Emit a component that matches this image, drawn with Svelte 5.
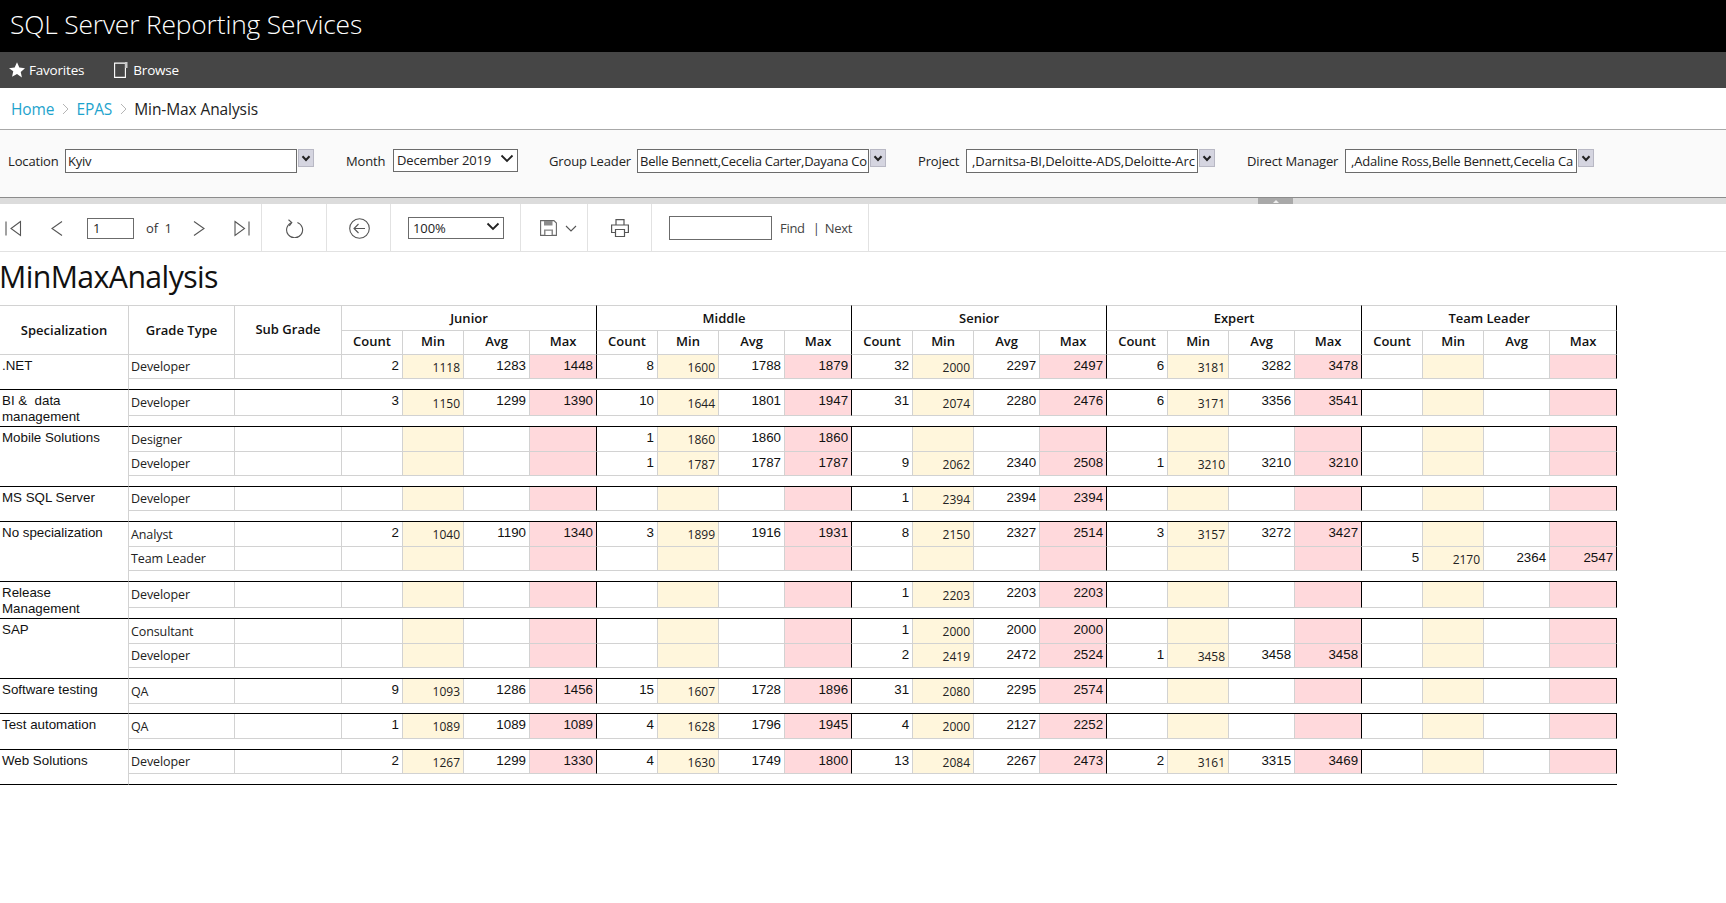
<script>
  const groups = ['Junior', 'Middle', 'Senior', 'Expert', 'Team Leader'];
  const subs = ['Count', 'Min', 'Avg', 'Max'];
  const widths = [61, 61, 66, 67];
  const S = (n) => Array(5).fill(0).map((_, i) => n[i] || null);
  const sections = [
    { name: '.NET', spacer: 11, rows: [{ g: 'Developer', h: 24, v: S([[2, 1118, 1283, 1448], [8, 1600, 1788, 1879], [32, 2000, 2297, 2497], [6, 3181, 3282, 3478]]) }] },
    { name: 'BI &\u00a0 data management', spacer: 11, rows: [{ g: 'Developer', h: 26, v: S([[3, 1150, 1299, 1390], [10, 1644, 1801, 1947], [31, 2074, 2280, 2476], [6, 3171, 3356, 3541]]) }] },
    { name: 'Mobile Solutions', spacer: 11, rows: [
      { g: 'Designer', h: 25, v: S([null, [1, 1860, 1860, 1860]]) },
      { g: 'Developer', h: 24, v: S([null, [1, 1787, 1787, 1787], [9, 2062, 2340, 2508], [1, 3210, 3210, 3210]]) }] },
    { name: 'MS SQL Server', spacer: 11, rows: [{ g: 'Developer', h: 24, v: S([null, null, [1, 2394, 2394, 2394]]) }] },
    { name: 'No specialization', spacer: 11, rows: [
      { g: 'Analyst', h: 25, v: S([[2, 1040, 1190, 1340], [3, 1899, 1916, 1931], [8, 2150, 2327, 2514], [3, 3157, 3272, 3427]]) },
      { g: 'Team Leader', h: 24, v: S([null, null, null, null, [5, 2170, 2364, 2547]]) }] },
    { name: 'Release Management', spacer: 11, rows: [{ g: 'Developer', h: 26, v: S([null, null, [1, 2203, 2203, 2203]]) }] },
    { name: 'SAP', spacer: 11, rows: [
      { g: 'Consultant', h: 25, v: S([null, null, [1, 2000, 2000, 2000]]) },
      { g: 'Developer', h: 24, v: S([null, null, [2, 2419, 2472, 2524], [1, 3458, 3458, 3458]]) }] },
    { name: 'Software testing', spacer: 10, rows: [{ g: 'QA', h: 25, v: S([[9, 1093, 1286, 1456], [15, 1607, 1728, 1896], [31, 2080, 2295, 2574]]) }] },
    { name: 'Test automation', spacer: 11, rows: [{ g: 'QA', h: 25, v: S([[1, 1089, 1089, 1089], [4, 1628, 1796, 1945], [4, 2000, 2127, 2252]]) }] },
    { name: 'Web Solutions', spacer: 11, rows: [{ g: 'Developer', h: 24, v: S([[2, 1267, 1299, 1330], [4, 1630, 1749, 1800], [13, 2084, 2267, 2473], [2, 3161, 3315, 3469]]) }] }
  ];
  const params = [
    { label: 'Location', value: 'Kyiv', cls: 'p-loc' },
    { label: 'Month', value: 'December 2019', cls: 'p-month', select: true },
    { label: 'Group Leader', value: 'Belle Bennett,Cecelia Carter,Dayana Co', cls: 'p-gl' },
    { label: 'Project', value: ',Darnitsa-BI,Deloitte-ADS,Deloitte-Arc', cls: 'p-pr' },
    { label: 'Direct Manager', value: ',Adaline Ross,Belle Bennett,Cecelia Ca', cls: 'p-dm' }
  ];
</script>

<div class="page">
  <header class="brand">SQL Server Reporting Services</header>
  <nav class="nav">
    <span class="nav-item fav">
      <svg width="16" height="16" viewBox="0 0 24 24"><path fill="#fff" d="M12 .5l3.500 7.800 8.500.9-6.400 5.700 1.800 8.400L12 18.100l-7.400 4.200 1.800-8.400L0 9.200l8.500-.9z"/></svg>
      Favorites
    </span>
    <span class="nav-item brw">
      <svg width="14" height="16" viewBox="0 0 14 16"><path fill="none" stroke="#fff" stroke-width="1.100" d="M.6 1.100h10.800v14.300H.6z"/><path fill="#c8c8c8" d="M11 0h2.500v6H11z"/></svg>
      Browse
    </span>
  </nav>
  <div class="crumbs">
    <span class="link">Home</span>
    <svg class="sep" width="7" height="12" viewBox="0 0 7 12"><path d="M1 1l5 5-5 5" fill="none" stroke="#b5b5b5" stroke-width="1"/></svg>
    <span class="link">EPAS</span>
    <svg class="sep" width="7" height="12" viewBox="0 0 7 12"><path d="M1 1l5 5-5 5" fill="none" stroke="#b5b5b5" stroke-width="1"/></svg>
    <span class="cur">Min-Max Analysis</span>
  </div>

  <div class="params">
    {#each params as p}
      <div class="param {p.cls}">
        <span class="plabel">{p.label}</span>
        {#if p.select}
          <span class="pselect">{p.value}
            <svg class="chev" width="14" height="9" viewBox="0 0 14 9"><path d="M1.500 1.500L7 7l5.500-5.500" fill="none" stroke="#222" stroke-width="1.800"/></svg>
          </span>
        {:else}
          <span class="pinput">{p.value}</span>
          <span class="pbtn"><svg width="10" height="7" viewBox="0 0 10 7"><path d="M1.500 1.200L5 5l3.500-3.800" fill="none" stroke="#222" stroke-width="2"/></svg></span>
        {/if}
      </div>
    {/each}
  </div>
  <div class="strip"><span class="handle"><i></i></span></div>

  <div class="toolbar">
    <div class="tsec t-pager">
      <svg class="i-first" width="17" height="17" viewBox="0 0 17 17"><path d="M1 1.500v14M15.500 1.500L6 8.500l9.500 7z" fill="none" stroke="#555" stroke-width="1.100"/></svg>
      <svg class="i-prev" width="13" height="17" viewBox="0 0 13 17"><path d="M12 1.500L2 8.500l10 7" fill="none" stroke="#555" stroke-width="1.100"/></svg>
      <span class="pg-input">1</span>
      <span class="of">of&nbsp; 1</span>
      <svg class="i-next" width="13" height="17" viewBox="0 0 13 17"><path d="M1 1.500l10 7-10 7" fill="none" stroke="#555" stroke-width="1.100"/></svg>
      <svg class="i-last" width="16" height="17" viewBox="0 0 16 17"><path d="M15 1.500v14M1 1.500l9.500 7-9.500 7z" fill="none" stroke="#555" stroke-width="1.100"/></svg>
    </div>
    <div class="tsec t-refresh">
      <svg width="19" height="19" viewBox="0 0 19 19"><path d="M6.800 3.400a8 8 0 1 0 5.600 0M3.500 .8L6.800 3.500 4.300 6.800" fill="none" stroke="#555" stroke-width="1.100"/></svg>
    </div>
    <div class="tsec t-back">
      <svg width="21" height="21" viewBox="0 0 21 21"><circle cx="10.500" cy="10.500" r="9.800" fill="none" stroke="#555" stroke-width="1.100"/><path d="M16 10.500H5M9.500 6l-4.500 4.500 4.500 4.500" fill="none" stroke="#555" stroke-width="1.100"/></svg>
    </div>
    <div class="tsec t-zoom">
      <span class="zoomsel">100%
        <svg class="chev" width="14" height="9" viewBox="0 0 14 9"><path d="M1.500 1.500L7 7l5.500-5.500" fill="none" stroke="#222" stroke-width="1.800"/></svg>
      </span>
    </div>
    <div class="tsec t-save">
      <svg width="17" height="16" viewBox="0 0 17 16"><path d="M.6.600h13.300l2.500 2.500v12.300H.6z" fill="none" stroke="#666" stroke-width="1.100"/><path d="M4 1h8.500v4.500H4zM4 9.500h9V15H4z" fill="#8a8a8a"/><path d="M5.500 10.800h6V15h-6z" fill="#fff"/></svg>
      <svg class="sv-chev" width="12" height="7" viewBox="0 0 12 7"><path d="M1 1l5 5 5-5" fill="none" stroke="#555" stroke-width="1.100"/></svg>
    </div>
    <div class="tsec t-print">
      <svg width="18" height="18" viewBox="0 0 18 18"><path d="M5 6V.6h8V6M4.500 13.500H.6V6h16.800v7.500h-3.900M4.500 10.500h9v7h-9z" fill="none" stroke="#555" stroke-width="1.200"/></svg>
    </div>
    <div class="tsec t-find">
      <span class="find-input"></span>
      <span class="find">Find</span><span class="bar">|</span><span class="find">Next</span>
    </div>
  </div>

  <h1 class="title">MinMaxAnalysis</h1>

  <table class="report">
    <colgroup>
      <col style="width:129px" /><col style="width:106px" /><col style="width:107px" />
      {#each groups as _}{#each widths as w}<col style="width:{w}px" />{/each}{/each}
    </colgroup>
    <thead>
      <tr class="h1">
        <th rowspan="2" class="hl spec-h">Specialization</th>
        <th rowspan="2" class="hl grade-h">Grade Type</th>
        <th rowspan="2" class="hl sub-h">Sub Grade</th>
        {#each groups as g}<th colspan="4" class="grp">{g}</th>{/each}
      </tr>
      <tr class="h2">
        {#each groups as _}
          {#each subs as s, i}<th class:end={i === 3}>{s}</th>{/each}
        {/each}
      </tr>
    </thead>
    <tbody>
      {#each sections as sec}
        {#each sec.rows as r, ri}
          <tr style="height:{r.h}px">
            {#if ri === 0}<td rowspan={sec.rows.length + 1} class="spec">{sec.name}</td>{/if}
            <td class="grade">{r.g}</td>
            <td class="sub"></td>
            {#each r.v as g}
              <td class="num">{g ? g[0] : ''}</td>
              <td class="min">{g ? g[1] : ''}</td>
              <td class="num">{g ? g[2] : ''}</td>
              <td class="num max end">{g ? g[3] : ''}</td>
            {/each}
          </tr>
        {/each}
        <tr style="height:{sec.spacer}px"><td colspan="22" class="spacer"></td></tr>
      {/each}
    </tbody>
  </table>
</div>

<style>
  :global(body) { margin: 0; background: #fff; overflow: hidden; }
  .page { font-family: "Open Sans", "Noto Sans", sans-serif; color: #222; width: 1726px; height: 903px; overflow: hidden; }
  .brand { height: 52px; background: #000; color: #fff; font-weight: 300; font-size: 26.350px; line-height: 48px; padding-left: 10px; letter-spacing: -0.15px; box-sizing: border-box; }
  .nav { height: 36px; background: #464646; color: #fff; display: flex; align-items: center; font-size: 13.500px; letter-spacing: -0.2px; }
  .nav-item { display: flex; align-items: center; }
  .fav { margin-left: 9px; gap: 4px; }
  .brw { margin-left: 30px; gap: 5px; }
  .crumbs { height: 41px; display: flex; align-items: center; font-size: 15.500px; padding-left: 11px; box-sizing: border-box; letter-spacing: -0.1px; }
  .link { color: #1ea3cd; }
  .sep { margin: 1px 7.500px 0; }
  .cur { color: #222; }
  .params { height: 69px; box-sizing: border-box; background: #fafafa; border-top: 1px solid #a8a8a8; border-bottom: 1px solid #8c8c8c; display: flex; align-items: flex-start; padding-top: 19px; font-size: 13px; letter-spacing: -0.15px; }
  .param { display: flex; align-items: flex-start; }
  .plabel { line-height: 24px; }
  .pinput { box-sizing: border-box; width: 232px; height: 24px; border: 1px solid #6b6b6b; background: #fff; line-height: 22px; padding: 0 2px; white-space: nowrap; letter-spacing: -0.27px; }
  .pbtn { box-sizing: border-box; width: 16px; height: 18px; margin-left: 1px; border: 1px solid #b8b8c4; background: #d5d5e0; display: flex; align-items: center; justify-content: center; }
  .p-loc { margin-left: 8px; } .p-loc .plabel { width: 57px; }
  .p-month { margin-left: 32px; } .p-month .plabel { width: 47px; }
  .pselect { box-sizing: border-box; width: 125px; height: 23px; border: 1px solid #6b6b6b; background: #fff; line-height: 21px; padding-left: 3px; position: relative; }
  .chev { position: absolute; right: 3px; top: 4px; }
  .p-gl { margin-left: 31px; } .p-gl .plabel { width: 88px; }
  .p-pr { margin-left: 32px; } .p-pr .plabel { width: 48px; }
  .p-pr .pinput { padding-left: 5px; letter-spacing: -0.08px; }
  .p-dm { margin-left: 32px; } .p-dm .plabel { width: 98px; }
  .p-dm .pinput { padding-left: 5px; letter-spacing: -0.2px; }
  .strip { height: 6px; background: #dcdcdc; display: flex; padding-left: 1258px; }
  .handle { width: 35px; height: 6px; background: #a9a9a9; display: flex; justify-content: center; align-items: center; }
  .handle i { border-left: 3px solid transparent; border-right: 3px solid transparent; border-bottom: 3px solid #eee; }
  .toolbar { height: 48px; box-sizing: border-box; border-bottom: 1px solid #e2e2e2; display: flex; font-size: 13px; letter-spacing: -0.1px; color: #444; }
  .tsec { box-sizing: border-box; height: 47px; padding-top: 1px; border-right: 1px solid #e2e2e2; display: flex; align-items: center; }
  .t-pager { width: 262px; padding-left: 5px; }
  .i-prev { margin-left: 28px; }
  .pg-input { box-sizing: border-box; width: 47px; height: 21px; border: 1px solid #6b6b6b; line-height: 19px; padding-left: 5px; margin-left: 24px; color: #222; }
  .of { margin-left: 12px; width: 36px; color: #333; }
  .i-next { margin-left: 11px; }
  .i-last { margin-left: 28px; }
  .t-refresh { width: 65px; padding-left: 23px; }
  .t-back { width: 64px; padding-left: 22px; }
  .t-zoom { width: 130px; padding-left: 17px; }
  .zoomsel { box-sizing: border-box; width: 96px; height: 22px; border: 1px solid #6b6b6b; line-height: 21px; padding-left: 4px; position: relative; color: #222; }
  .t-save { width: 67px; padding-left: 19px; }
  .sv-chev { margin-left: 8px; }
  .t-print { width: 64px; padding-left: 23px; }
  .t-find { width: 217px; padding-left: 17px; }
  .find-input { box-sizing: border-box; width: 103px; height: 24px; border: 1px solid #6b6b6b; margin-right: 8px; }
  .bar { margin: 0 5px 0 8px; }
  .find { letter-spacing: -0.3px; }
  .title { margin: 0 0 0 -1px; height: 53px; font-weight: 400; font-size: 30.300px; line-height: 50px; color: #111; letter-spacing: -0.6px; }
  .report { border-collapse: separate; border-spacing: 0; table-layout: fixed; width: 1617px; }
  .report th, .report td { box-sizing: border-box; border-right: 1px solid #d2d2d2; border-bottom: 1px solid #d2d2d2; padding: 0; overflow: hidden; }
  .report th { font-size: 13px; font-weight: 600; color: #111; text-align: center; }
  .h1 { height: 26px; }
  .h2 { height: 24px; }
  .h1 th { border-top: 1px solid #d2d2d2; }
  .h2 th { padding-bottom: 4px; }
  .sub-h { padding-bottom: 3px !important; }
  .grp { border-right-color: #000 !important; padding-bottom: 0 !important; }
  .end { border-right-color: #000 !important; }
  .spec { font-family: "Liberation Sans", Arial, sans-serif; font-size: 13.330px; line-height: 15.500px; padding: 3px 2px 0 !important; vertical-align: top; color: #111; border-bottom-color: #000 !important; white-space: normal; }
  .grade { font-size: 12.500px; padding-left: 2px !important; color: #222; letter-spacing: -0.1px; }
  .num { font-family: "Liberation Sans", Arial, sans-serif; font-size: 13.330px; text-align: right; padding-right: 3px !important; vertical-align: top; padding-top: 3px !important; color: #111; }
  .min { background: #fff6dc; font-size: 12px; text-align: right; padding-right: 3px !important; padding-top: 1px !important; color: #222; }
  .max { background: #ffd9dc; }
  .spacer { border-right: none !important; border-bottom-color: #000 !important; }
</style>
